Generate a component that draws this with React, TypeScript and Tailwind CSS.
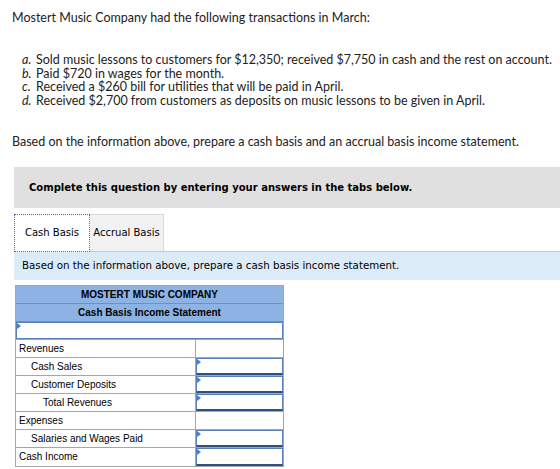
import React from "react";

const transactions = [
  ["a.", "Sold music lessons to customers for $12,350; received $7,750 in cash and the rest on account."],
  ["b.", "Paid $720 in wages for the month."],
  ["c.", "Received a $260 bill for utilities that will be paid in April."],
  ["d.", "Received $2,700 from customers as deposits on music lessons to be given in April."],
];

type Row = { label: string; indent: number; input: boolean };

const rows: Row[] = [
  { label: "Revenues", indent: 0, input: false },
  { label: "Cash Sales", indent: 1, input: true },
  { label: "Customer Deposits", indent: 1, input: true },
  { label: "Total Revenues", indent: 2, input: true },
  { label: "Expenses", indent: 0, input: false },
  { label: "Salaries and Wages Paid", indent: 1, input: true },
  { label: "Cash Income", indent: 0, input: true },
];

const indentClass = ["pl-[3px]", "pl-[15px]", "pl-[27px]"];

// little blue marker in the corner of every answer cell
const Marker = () => (
  <span className="absolute left-0 top-0 h-0 w-0 border-y-[3px] border-l-[4px] border-y-transparent border-l-[#3f7fd6]" />
);

const InputCell = ({ className = "" }: { className?: string }) => (
  <div className={`relative h-full border border-[#5b7fb8] bg-white ${className}`}>
    <Marker />
  </div>
);

export default function App() {
  return (
    <div className="min-h-[469px] bg-white pt-[11px] text-[#222]">
      <div className="pl-[12px] font-['Lato',sans-serif] text-[12.5px] leading-[14px]">
        <p>Mostert Music Company had the following transactions in March:</p>
        <ul className="mt-[28px] pl-[10px]">
          {transactions.map(([k, t]) => (
            <li key={k} className="flex leading-[13.7px]">
              <span className="w-[14px] italic">{k}</span>
              <span>{t}</span>
            </li>
          ))}
        </ul>
        <p className="mt-[27px]">Based on the information above, prepare a cash basis and an accrual basis income statement.</p>
      </div>

      <div className="ml-[14px] mt-[18px] flex h-[41px] items-center bg-[#e0e0e0] pl-[15px] font-['DejaVu_Sans',sans-serif] text-[10px] font-bold text-black">
        Complete this question by entering your answers in the tabs below.
      </div>

      <div className="ml-[14px] mt-[6px] flex h-[38px] border-b border-[#c8c8c8] font-['DejaVu_Sans',sans-serif] text-[10px] text-black">
        <div className="relative -mb-px flex w-[76px] items-center justify-center border border-dotted border-[#3b6fb5] bg-white">
          Cash Basis
        </div>
        <div className="flex w-[74px] items-center justify-center border-r border-t border-[#d8d8d8] bg-[#f2f2f2]">
          Accrual Basis
        </div>
      </div>

      <div className="ml-[14px] flex h-[28px] items-center bg-[#dcebf8] pl-[8px] font-['DejaVu_Sans',sans-serif] text-[10.25px] text-black">
        Based on the information above, prepare a cash basis income statement.
      </div>

      <div className="ml-[15px] mt-[5px] w-[269px] border border-[#a6a6a6] font-['Liberation_Sans',Arial,sans-serif] text-[10px] text-black">
        <div className="flex h-[18px] items-center justify-center border-b border-[#8b8b8b] bg-[#8cb3e3] font-bold">
          MOSTERT MUSIC COMPANY
        </div>
        <div className="flex h-[18px] items-center justify-center border-b border-[#8b8b8b] bg-[#8cb3e3] font-bold">
          Cash Basis Income Statement
        </div>
        <div className="h-[18px] border-b border-[#a6a6a6]">
          <InputCell />
        </div>
        {rows.map((r, i) => (
          <div
            key={r.label}
            className={`grid h-[18px] grid-cols-[180px_1fr] ${i < rows.length - 1 ? "border-b border-[#a6a6a6]" : ""}`}
          >
            <div className={`flex items-center border-r border-[#a6a6a6] ${indentClass[r.indent]}`}>{r.label}</div>
            {r.input ? <InputCell className="border-b-2 border-b-[#2f4f80]" /> : <div />}
          </div>
        ))}
      </div>
    </div>
  );
}
